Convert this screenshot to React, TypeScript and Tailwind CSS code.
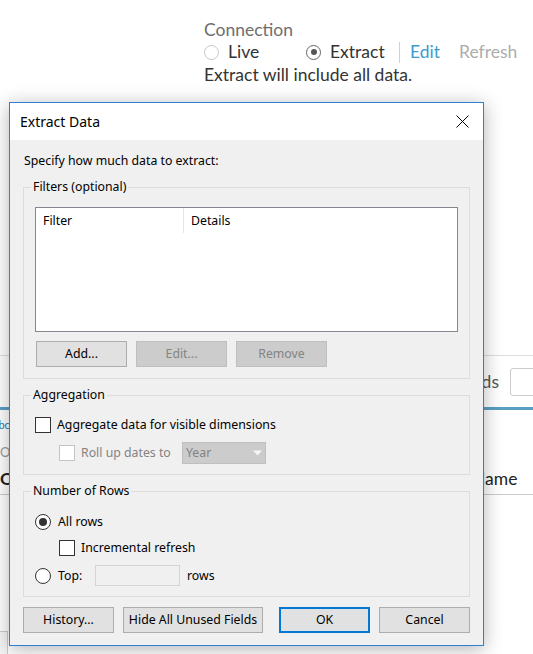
import React from "react";

function DlgRadio({ checked }: { checked?: boolean }) {
  return (
    <span className="flex h-[16px] w-[16px] shrink-0 items-center justify-center rounded-full border border-[#333] bg-white">
      {checked && <span className="h-[8px] w-[8px] rounded-full bg-[#333]" />}
    </span>
  );
}

function DlgCheck({ disabled }: { disabled?: boolean }) {
  return (
    <span
      className={
        disabled
          ? "block h-[16px] w-[16px] shrink-0 border border-[#c4c4c4] bg-white"
          : "block h-[16px] w-[16px] shrink-0 border border-[#333] bg-white"
      }
    />
  );
}

function Btn({
  children,
  w,
  disabled,
  primary,
}: {
  children: React.ReactNode;
  w: string;
  disabled?: boolean;
  primary?: boolean;
}) {
  let cls = "flex h-[26px] shrink-0 items-center justify-center ";
  if (disabled) cls += "border border-[#bfbfbf] bg-[#cccccc] text-[#838383]";
  else if (primary) cls += "border-2 border-[#0078d7] bg-[#e1e1e1] text-black";
  else cls += "border border-[#adadad] bg-[#e1e1e1] text-black";
  return <div className={cls + " " + w}>{children}</div>;
}

export default function App() {
  return (
    <div className="relative h-[654px] w-[533px] overflow-hidden bg-white">
      {/* Background page */}
      <div className="font-['Lato',sans-serif] text-[17.5px] leading-[22px] text-[#333]">
        <div className="pl-[204px] pt-[19px]">
          <div className="text-[#6e6e6e]">Connection</div>
          <div className="flex h-[22px] items-center">
            <div className="flex w-[102px] items-center">
              <span className="h-[15px] w-[15px] rounded-full border border-[#c8c8c8] bg-white" />
              <span className="ml-[9px]">Live</span>
            </div>
            <div className="flex w-[93px] items-center">
              <span className="flex h-[15px] w-[15px] items-center justify-center rounded-full border border-[#666] bg-white">
                <span className="h-[6px] w-[6px] rounded-full bg-[#555]" />
              </span>
              <span className="ml-[9px]">Extract</span>
            </div>
            <span className="h-[21px] w-px bg-[#d0d0d0]" />
            <span className="ml-[10px] text-[#3d9ad1]">Edit</span>
            <span className="ml-[19px] text-[#adadad]">Refresh</span>
          </div>
          <div className="mt-[1px]">Extract will include all data.</div>
        </div>

        <div className="mt-[269px] h-px bg-[#dedede]" />
        <div className="flex h-[51px] items-center">
          <div className="w-[499px] shrink-0 text-right text-[#555]">Show Fields</div>
          <div className="ml-[11px] h-[28px] w-[40px] shrink-0 rounded-[3px] border border-[#cccccc]" />
        </div>
        <div className="h-[3px] bg-[#5a9fc3]" />
        <div className="flex h-[30px] items-center">
          <span className="ml-[-9px] text-[11px] text-[#2e7ab0]">Abc</span>
        </div>
        <div className="flex h-[24px] items-center">
          <span className="w-[22px] shrink-0 overflow-hidden whitespace-nowrap text-[13px] text-[#999]">Orders</span>
        </div>
        <div className="flex h-[30px] items-center text-[#222]">
          <span className="w-[22px] shrink-0 overflow-hidden whitespace-nowrap font-bold">Order Date</span>
          <span className="ml-[450px] shrink-0 whitespace-nowrap">Name</span>
        </div>
        <div className="h-px bg-[#cccccc]" />
        <div className="mt-[136px] h-[30px] w-[8px] border-r border-t border-[#cccccc] bg-[#f5f5f5]" />
      </div>

      {/* Dialog */}
      <div className="absolute left-[9px] top-[102px] w-[475px] border border-[#2b80d0] bg-[#f0f0f0] font-['Noto_Sans',sans-serif] text-[12.3px] leading-[16px] text-black shadow-[0_3px_18px_rgba(0,0,0,0.3)]">
        <div className="flex h-[37px] items-center justify-between bg-white pl-[10px] pr-[14px]">
          <span className="text-[14px]">Extract Data</span>
          <svg width="13" height="13" viewBox="0 0 13 13">
            <path d="M0.5 0.5 L12.5 12.5 M12.5 0.5 L0.5 12.5" stroke="#000" strokeWidth="1" fill="none" />
          </svg>
        </div>

        <div className="px-[13px] pb-[12px] pt-[13px]">
          <div className="pl-[1px]">Specify how much data to extract:</div>

          {/* Filters */}
          <fieldset className="mt-[10px] border border-[#dcdcdc] px-0 pb-[11px] pt-[12px]">
            <legend className="ml-[7px] px-[2px]">Filters (optional)</legend>
            <div className="px-[11px]">
              <div className="h-[125px] border border-[#828790] bg-white">
                <div className="flex h-[25px] items-center">
                  <div className="flex h-full w-[148px] items-center border-r border-[#e5e5e5] pl-[7px]">Filter</div>
                  <div className="pl-[7px]">Details</div>
                </div>
              </div>
              <div className="mt-[9px] flex gap-[9px] pl-[1px]">
                <Btn w="w-[91px]">Add...</Btn>
                <Btn w="w-[91px]" disabled>Edit...</Btn>
                <Btn w="w-[91px]" disabled>Remove</Btn>
              </div>
            </div>
          </fieldset>

          {/* Aggregation */}
          <fieldset className="mt-[8px] border border-[#dcdcdc] px-0 pb-[10px] pt-[14px]">
            <legend className="ml-[7px] px-[2px]">Aggregation</legend>
            <div className="px-[11px]">
              <div className="flex h-[16px] items-center">
                <DlgCheck />
                <span className="ml-[6px]">Aggregate data for visible dimensions</span>
              </div>
              <div className="mt-[9px] flex h-[22px] items-center pl-[24px]">
                <DlgCheck disabled />
                <span className="ml-[6px] w-[101px] shrink-0 text-[#838383]">Roll up dates to</span>
                <div className="flex h-[22px] w-[84px] items-center justify-between border border-[#bfbfbf] bg-[#cccccc] pl-[3px] pr-[3px] text-[#838383]">
                  <span>Year</span>
                  <svg width="9" height="6" viewBox="0 0 9 6">
                    <path d="M0 0.5 L9 0.5 L4.5 5.5 Z" fill="#f6f6f6" />
                  </svg>
                </div>
              </div>
            </div>
          </fieldset>

          {/* Number of rows */}
          <fieldset className="mt-[8px] border border-[#dcdcdc] px-0 pb-[10px] pt-[15px]">
            <legend className="ml-[7px] px-[2px]">Number of Rows</legend>
            <div className="px-[11px]">
              <div className="flex h-[16px] items-center">
                <DlgRadio checked />
                <span className="ml-[7px]">All rows</span>
              </div>
              <div className="mt-[10px] flex h-[16px] items-center pl-[24px]">
                <DlgCheck />
                <span className="ml-[6px]">Incremental refresh</span>
              </div>
              <div className="mt-[9px] flex h-[21px] items-center">
                <DlgRadio />
                <span className="ml-[7px] w-[37px] shrink-0">Top:</span>
                <div className="h-[21px] w-[85px] shrink-0 border border-[#d4d4d4] bg-[#f0f0f0]" />
                <span className="ml-[7px]">rows</span>
              </div>
            </div>
          </fieldset>

          <div className="mt-[10px] flex items-center">
            <Btn w="w-[91px]">History...</Btn>
            <div className="ml-[9px]">
              <Btn w="w-[140px]">Hide All Unused Fields</Btn>
            </div>
            <div className="flex-1" />
            <Btn w="w-[91px]" primary>OK</Btn>
            <div className="ml-[9px]">
              <Btn w="w-[91px]">Cancel</Btn>
            </div>
          </div>
        </div>
      </div>
    </div>
  );
}
